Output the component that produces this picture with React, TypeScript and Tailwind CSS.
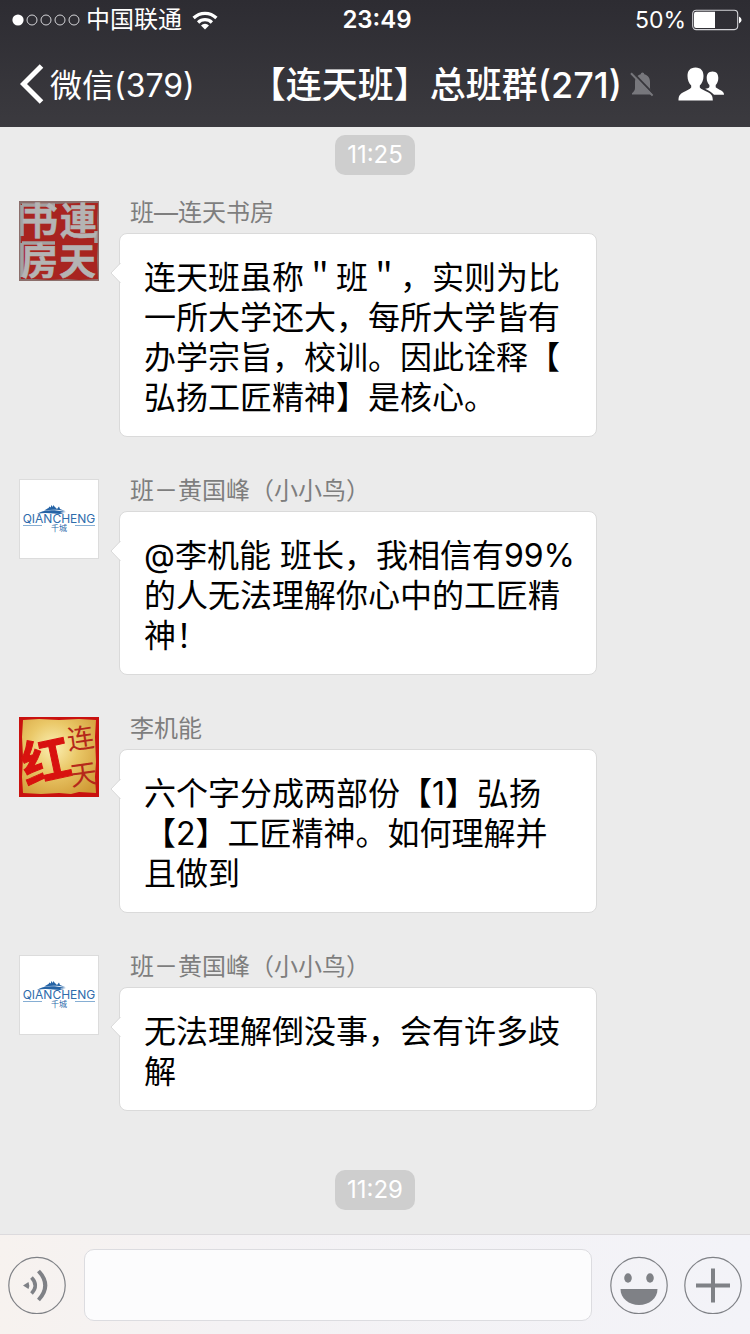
import React from "react";

const FONT = "font-['Inter','Noto_Sans_CJK_SC',sans-serif]";

function SignalDots() {
  return (
    <svg viewBox="0 0 68 12" className="h-3 w-[68px]" role="img" aria-label="Signal">
      <circle cx="6" cy="6" r="5.6" fill="#fff" />
      {[20, 34, 48, 62].map((x) => (
        <circle key={x} cx={x} cy="6" r="5" fill="none" stroke="#d4d4d8" strokeWidth="1" />
      ))}
    </svg>
  );
}

function WifiIcon() {
  return (
    <svg viewBox="0 0 26 19" className="h-[19px] w-[26px]" role="img" aria-label="Wi-Fi">
      <g fill="none" stroke="#fff" strokeWidth="3.2">
        <path d="M1.6 7 A16.2 16.2 0 0 1 24.4 7" />
        <path d="M6.1 11.5 A9.8 9.8 0 0 1 19.9 11.5" />
      </g>
      <path d="M13 18.4 L9 14.4 A5.7 5.7 0 0 1 17 14.4 Z" fill="#fff" />
    </svg>
  );
}

function BatteryIcon() {
  return (
    <svg viewBox="0 0 50 22" className="h-[22px] w-[50px]" role="img" aria-label="Battery">
      <rect x="0.7" y="1.2" width="45" height="19.4" rx="3.5" fill="none" stroke="#d4d4d8" strokeWidth="1.1" />
      <path d="M4 2.7 H23 V19 H4 Q2 19 2 17 V4.700 Q2 2.700 4 2.700Z" fill="#fff" />
      <path d="M47 7.600 Q49.600 9 49.600 11 Q49.600 13 47 14.400Z" fill="#fff" />
    </svg>
  );
}

function MutedBell() {
  return (
    <svg viewBox="0 0 24 26" className="h-[26px] w-6" role="img" aria-label="Muted">
      <path
        d="M12.500 1.500 a1.800 1.800 0 0 1 1.800 1.700 C18.400 4.200 20 7.400 20 11 V17 C20 19.500 21.500 21 22.500 22.300 V23.500 H2 V22.300 C3.500 21 5 19.500 5 17 V11 C5 7.400 6.800 4.200 10.700 3.200 A1.800 1.800 0 0 1 12.500 1.500Z"
        fill="#77777c"
      />
      <path d="M2.500 1.200 L24 23.500" stroke="#38373c" strokeWidth="2" />
      <path d="M1 2.300 L22.600 24.600" stroke="#77777c" strokeWidth="2" />
    </svg>
  );
}

function PeopleIcon() {
  return (
    <svg viewBox="0 0 46 34" className="h-[34px] w-[46px]" fill="#fff" aria-hidden="true">
      <path d="M17.500 0.500 C23 0.500 25.500 4 25.500 9 C25.500 13 24 16.500 21.800 18.500 V20.600 C22.900 22.300 26.500 23.600 30 25.300 C33.800 27.200 34.800 29.500 34.800 33.500 H0.500 C0.500 29.500 1.500 27.200 5.300 25.300 C8.800 23.600 12.100 22.300 13.200 20.600 V18.500 C11 16.500 9.500 13 9.500 9 C9.500 4 12 0.500 17.500 0.500Z" />
      <path d="M34.500 4.500 C38.600 4.500 40.300 7.300 40.300 11 C40.300 14 39.300 16.500 37.700 18 V20.200 C38.600 21.400 41 22.200 43.200 23.500 C45.300 24.800 46 26 46 27.800 H36 C34.500 26 32 24.500 27.200 21.800 C29 21.600 31 21 31.400 20 V18 C29.800 16.500 28.700 14 28.700 11 C28.700 7.300 30.400 4.500 34.500 4.500Z" />
    </svg>
  );
}

function SealAvatar() {
  return (
    <svg viewBox="0 0 80 80" className="size-20" role="img" aria-label="连天书房">
      <rect width="80" height="80" fill="#8b6f6c" />
      <path
        d="M2 3 L20 2 L38 3 L60 2 L79 2 L78 20 L79 40 L78 58 L79 78 L60 79 L48 78 L30 79 L16 78 L2 78 L3 58 L2 40 L3 20Z"
        fill="#a82420"
      />
      <path d="M3 4 H36 M3 4 V35 M3 42 V76 M3 42 H36 M77 42 V30" stroke="#a2a1a1" strokeWidth="3.500" />
      <text
        fill="#b4b4b4"
        stroke="#b4b4b4"
        strokeWidth="0.500"
        fontWeight="700"
        fontSize="37"
        fontFamily="'Noto Sans CJK TC','Noto Sans CJK SC',sans-serif"
      >
        <tspan x="2" y="34">书</tspan>
        <tspan x="41" y="34">連</tspan>
        <tspan x="2" y="74">房</tspan>
        <tspan x="40" y="74">天</tspan>
      </text>
    </svg>
  );
}

function QianchengAvatar() {
  return (
    <svg viewBox="0 0 80 80" className="size-20" role="img" aria-label="QIANCHENG 千城">
      <rect x="0.500" y="0.500" width="79" height="79" fill="#fff" stroke="#dcdcdc" />
      <path
        d="M18 35 C23 31 33 30 47 33 C41 33.500 39 34 45 34.500 C38 36 29 32.500 18 35Z M25 31.500 C28 30 29 29 29.500 29 L30.500 27.500 L32 28.500 V26 L34 28 V26 L36.500 28.500 L38 30 L40 27.500 L41 30 L46 32 C38 30 31 30.500 25 31.500Z"
        fill="#2563a5"
      />
      <text textAnchor="middle" fill="#2e6cab" fontFamily="Inter,'Noto Sans CJK SC',sans-serif">
        <tspan x="40" y="43.500" fontSize="12">QIANCHENG</tspan>
        <tspan x="40" y="51.500" fontSize="8">千城</tspan>
      </text>
      <path d="M4 46.500 H23 M56 46.500 H76" stroke="#86aed3" strokeWidth="1" />
    </svg>
  );
}

function RedAvatar() {
  return (
    <svg viewBox="0 0 80 80" className="size-20" role="img" aria-label="红连天">
      <defs>
        <radialGradient id="gold" cx="0.42" cy="0.38" r="0.75">
          <stop offset="0" stopColor="#fbf0b4" />
          <stop offset="0.450" stopColor="#eac868" />
          <stop offset="1" stopColor="#d09a35" />
        </radialGradient>
      </defs>
      <rect width="80" height="80" fill="#c9110f" />
      <path
        d="M4 3 L20 2 L40 3 L60 2 L77 3 L76 20 L77 45 L76 60 L77 76 L60 75 L52 77 L40 76 L22 77 L4 76 L3 60 L4 40 L3 20Z"
        fill="url(#gold)"
      />
      <g textAnchor="middle" fontFamily="'Noto Sans CJK SC',sans-serif">
        <text x="27" y="62" fontSize="49" fontWeight="700" fill="#d8120f" stroke="#d8120f" transform="rotate(-12 27 44)">
          红
        </text>
        <text fontSize="27" fill="#b5281a" transform="rotate(-8 64 40)">
          <tspan x="64" y="31">连</tspan>
          <tspan x="62" y="67">天</tspan>
        </text>
      </g>
    </svg>
  );
}

function BubbleTail() {
  return (
    <svg viewBox="0 0 11 22" className="absolute -left-2.5 top-7 h-[22px] w-[11px]" aria-hidden="true">
      <path d="M11 1 L1 11 L11 21Z" fill="#fff" />
      <path d="M10.500 1 L1 11 L10.500 21" fill="none" stroke="#dadada" />
    </svg>
  );
}

interface MessageProps {
  name: string;
  avatar: React.ReactNode;
  lines: string[];
}

function Message({ name, avatar, lines }: MessageProps) {
  return (
    <article className="flex items-start gap-5">
      <div className="shrink-0">{avatar}</div>
      <div className="min-w-0">
        <h2 className="pb-2 pl-[11px] text-[24px] leading-6 text-[#7e7e7e]">{name}</h2>
        <div className="relative w-[478px] max-w-full rounded-lg border border-[#dadada] bg-white pt-6 pr-5 pb-[18px] pl-6">
          <BubbleTail />
          <p className="text-[32px] leading-10 whitespace-nowrap text-black">
            {lines.map((line) => (
              <span key={line} className="block">
                {line}
              </span>
            ))}
          </p>
        </div>
      </div>
    </article>
  );
}

function TimeStamp({ time }: { time: string }) {
  return (
    <time className="mx-auto block w-20 rounded-[10px] bg-[#cecece] text-center text-[24px] leading-10 text-white">
      {time}
    </time>
  );
}

export default function App() {
  return (
    <div className={`flex min-h-screen flex-col bg-[#ebebeb] [text-spacing-trim:space-all] ${FONT}`} lang="zh-CN">
      <header className="bg-linear-to-b from-[#2d2c32] to-[#3b3a3f] text-white">
        <div className="grid h-10 grid-cols-3 items-center pr-2 pl-3 text-[24px] leading-10">
          <div className="flex items-center gap-1.5">
            <SignalDots />
            <span>中国联通</span>
            <span className="pl-1"><WifiIcon /></span>
          </div>
          <time className="text-center font-semibold">23:49</time>
          <div className="flex items-center justify-end gap-1.5">
            <span className="text-[23px]">50%</span>
            <BatteryIcon />
          </div>
        </div>
        <nav className="flex h-[87px] items-center pr-[26px] pl-5">
          <button className="flex items-center gap-1.5 text-[32px] leading-10" type="button">
            <svg viewBox="0 0 24 40" className="h-10 w-6" aria-hidden="true">
              <path d="M21.500 2 L3.500 20 L21.500 38" fill="none" stroke="#fff" strokeWidth="5" />
            </svg>
            <span className="pt-1">微信(379)</span>
          </button>
          <div className="ml-auto flex items-center gap-2">
            <h1 className="pt-[3px] text-[36px] leading-10 font-medium whitespace-nowrap">【连天班】总班群(271)</h1>
            <MutedBell />
          </div>
          <button type="button" aria-label="群成员" className="ml-6">
            <PeopleIcon />
          </button>
        </nav>
      </header>

      <main className="flex grow flex-col px-[19px] pt-2 pb-6">
        <TimeStamp time="11:25" />
        <div className="flex flex-col gap-[42px] pt-[26px] pb-[59px]">
          <Message
            name="班—连天书房"
            avatar={<SealAvatar />}
            lines={["连天班虽称＂班＂，实则为比", "一所大学还大，每所大学皆有", "办学宗旨，校训。因此诠释【", "弘扬工匠精神】是核心。"]}
          />
          <Message
            name="班－黄国峰（小小鸟）"
            avatar={<QianchengAvatar />}
            lines={["@李机能 班长，我相信有99%", "的人无法理解你心中的工匠精", "神！"]}
          />
          <Message
            name="李机能"
            avatar={<RedAvatar />}
            lines={["六个字分成两部份【1】弘扬", "【2】工匠精神。如何理解并", "且做到"]}
          />
          <Message
            name="班－黄国峰（小小鸟）"
            avatar={<QianchengAvatar />}
            lines={["无法理解倒没事，会有许多歧", "解"]}
          />
        </div>
        <TimeStamp time="11:29" />
      </main>

      <footer className="flex h-[100px] items-center gap-[18px] border-t border-[#dcdadd] bg-linear-to-r from-[#f7f2ef] via-[#f4f2f4] via-30% to-[#f3f3f8] px-2">
        <button type="button" aria-label="语音" className="shrink-0">
          <svg viewBox="0 0 58 58" className="size-[58px]" fill="none" stroke="#7f8186">
            <circle cx="29" cy="29.500" r="28.200" strokeWidth="1.200" />
            <path d="M15 29.500 L20.500 26 Q22 29.500 20.500 33Z" fill="#7f8186" stroke="none" />
            <path d="M23.500 21.500 Q31 29.500 23.500 37.500" strokeWidth="3.600" />
            <path d="M30.500 15 Q44 29.500 30.500 44" strokeWidth="4" />
          </svg>
        </button>
        <input
          aria-label="消息"
          className="h-18 min-w-0 flex-1 rounded-[10px] border border-[#dcdce0] bg-[#fcfcfd] px-4 text-[32px] outline-none"
        />
        <div className="flex shrink-0 gap-4">
          <button type="button" aria-label="表情">
            <svg viewBox="0 0 58 58" className="size-[58px]" fill="#7f8186">
              <circle cx="29" cy="29.500" r="28.200" fill="none" stroke="#7f8186" strokeWidth="1.200" />
              <ellipse cx="18" cy="22" rx="3.800" ry="4.700" />
              <ellipse cx="40" cy="22" rx="3.800" ry="4.700" />
              <path d="M10.500 33 H47.500 C47.500 42.500 39 49 29 49 C19 49 10.500 42.500 10.500 33Z" />
            </svg>
          </button>
          <button type="button" aria-label="更多">
            <svg viewBox="0 0 58 58" className="size-[58px]" fill="none" stroke="#7f8186">
              <circle cx="29" cy="29.500" r="28.200" strokeWidth="1.200" />
              <path d="M29 12.500 V46.500 M12 29.500 H46" strokeWidth="4" />
            </svg>
          </button>
        </div>
      </footer>
    </div>
  );
}
